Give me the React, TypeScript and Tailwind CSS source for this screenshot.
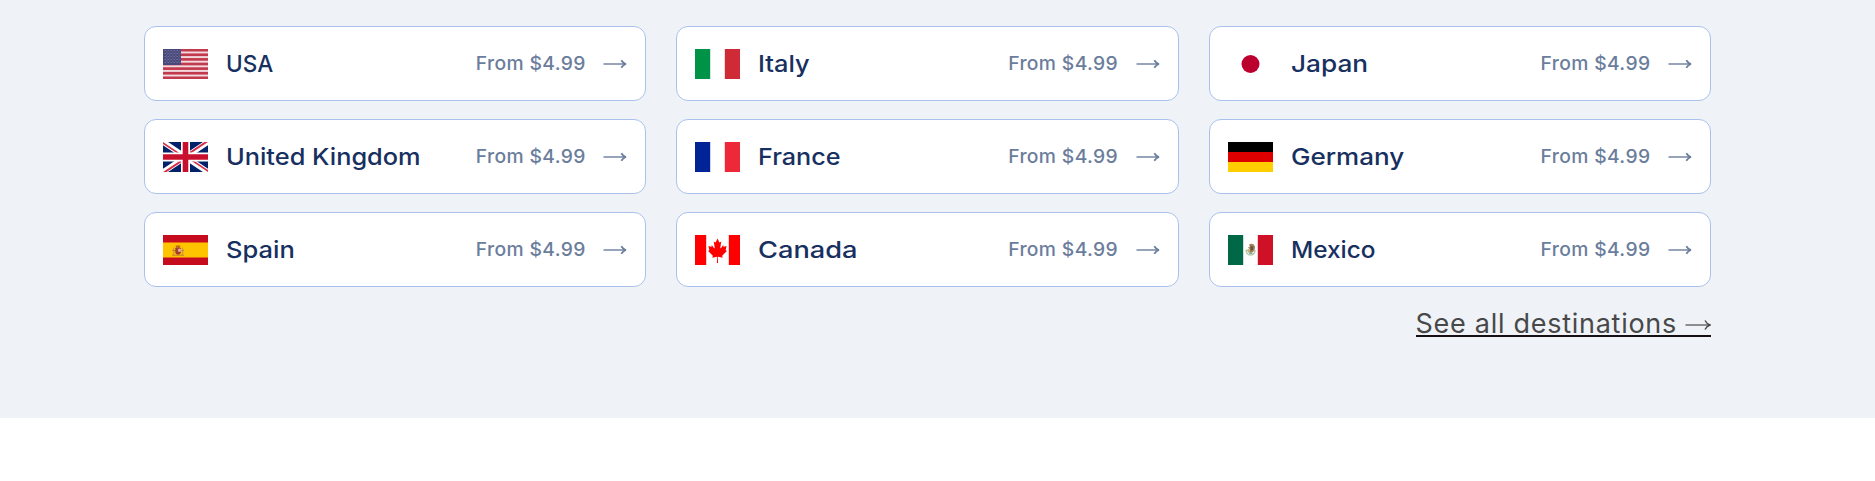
import type { ReactNode } from "react";

interface Destination {
  name: string;
  price: string;
  stretch: string;
  flag: ReactNode;
}

function FlagSvg({ children }: { children: ReactNode }) {
  return (
    <svg viewBox="0 0 45 30" className="h-[30px] w-[45px] shrink-0" aria-hidden="true">
      {children}
    </svg>
  );
}

function VerticalBands({ left, right }: { left: string; right: string }) {
  return (
    <>
      <path d="M0 0h45v30H0z" fill="#fff" />
      <path d="M0 0h15.2v30H0z" fill={left} />
      <path d="M29.8 0H45v30H29.8z" fill={right} />
    </>
  );
}

function UsaFlag() {
  return (
    <FlagSvg>
      <path d="M0 0h45v30H0z" fill="#f3dadf" />
      {[0, 1, 2, 3, 4, 5, 6].map((i) => (
        <rect key={i} y={(i * 60) / 13 - 0.2} width="45" height="2.7" fill="#c23a4e" />
      ))}
      <path d="M0 0h18v16H0z" fill="#48477b" />
      {[1.5, 4.5, 7.5, 10.5, 13.5].map((y) => (
        <path key={y} d={`M1.5 ${y}h16`} stroke="#fff" strokeOpacity=".22" strokeDasharray="1.5 1.5" />
      ))}
      {[3, 6, 9, 12].map((y) => (
        <path key={y} d={`M3 ${y}h14`} stroke="#fff" strokeOpacity=".2" strokeDasharray="1.5 1.5" />
      ))}
    </FlagSvg>
  );
}

function UkFlag() {
  return (
    <FlagSvg>
      <path d="M0 0h45v30H0z" fill="#012169" />
      <path d="M0 0l45 30M45 0L0 30" stroke="#fff" strokeWidth="5.6" />
      <path
        d="M0 0l22.5 15h-3L0 2zM45 0L22.5 15h-3.6L41.4 0zM45 30L22.5 15h3L45 28zM0 30l22.5-15h3.6L3.6 30z"
        fill="#d5304a"
      />
      <path d="M22.5 0v30M0 15h45" stroke="#fff" strokeWidth="9" />
      <path d="M22.5 0v30M0 15h45" stroke="#c8102e" strokeWidth="5.6" />
    </FlagSvg>
  );
}

function SpainFlag() {
  return (
    <FlagSvg>
      <path d="M0 0h45v30H0z" fill="#c60b1e" />
      <path d="M0 7.5h45v15H0z" fill="#ffc400" />
      <path d="M10 12.5h1.4v8H10zM18.8 12.5h1.4v8h-1.4z" fill="#d5983a" />
      <path d="M9 15.5h12M9 20.3h12" stroke="#c5842f" strokeWidth="1.1" />
      <path d="M12.5 10.8q2.5-1 5 0l-.5 2.200h-4z" fill="#c06a1c" />
      <path d="M12.3 13h5.600v4.500q-.6 2.200-2.800 2.200t-2.800-2.200z" fill="#a83c28" />
      <circle cx="16.6" cy="15.3" r="1.7" fill="#d5b1b4" />
    </FlagSvg>
  );
}

function CanadaFlag() {
  return (
    <FlagSvg>
      <path d="M0 0h45v30H0z" fill="#fff" />
      <path d="M0 0h11.2v30H0zM33.8 0H45v30H33.8z" fill="#f00" />
      <path
        transform="translate(4.05 .3) scale(.82 1)"
        d="M22.5 3.2l-2 3.6c-.3.5-.8.4-1.2.2l-1.4-.8 1.1 5.8c.2 1-.5 1-.9.6l-2.5-2.9-.4 1.5c0 .2-.2.4-.6.3l-3.2-.7.9 3.1c.2.6.3 1-.2 1.2l-1.1.5 5.5 4.5c.2.2.3.5.2.8l-.5 1.6 5.4-1c.3 0 .5.1.5.4l-.3 5.8h1.4l-.3-5.8c0-.3.2-.4.5-.4l5.4 1-.5-1.6c-.1-.3 0-.6.2-.8l5.5-4.5-1.1-.5c-.5-.2-.4-.6-.2-1.2l.9-3.1-3.2.7c-.4.1-.6-.1-.6-.3l-.4-1.5-2.5 2.9c-.4.4-1.1.4-.9-.6l1.1-5.8-1.4.8c-.4.2-.9.3-1.2-.2z"
        fill="#f00"
      />
    </FlagSvg>
  );
}

function MexicoFlag() {
  return (
    <FlagSvg>
      <VerticalBands left="#006847" right="#ce1126" />
      <path d="M18 14.5c.1 3.4 1.8 5.4 4.5 5.4s4.5-2 4.5-4.9" fill="none" stroke="#b9c9ad" strokeWidth="1.5" />
      <path d="M21 9.3c4-1.6 6.2.7 6 3.7-.2 2.400-1.800 4.300-4 5l-3.500-1 2.400-2.800-2-1.600 2-.8z" fill="#a58460" />
      <path d="M22.5 10.6l3 1.200-.6 3.400-2.400.5z" fill="#6b5541" />
      <path d="M18.2 15.2l2.8-1.500 1.400 2-1.600 1.600z" fill="#c8b37c" />
      <path d="M21 18.3h3.5" stroke="#6fae9b" strokeWidth="1.2" />
    </FlagSvg>
  );
}

const DESTINATIONS: Destination[] = [
  { name: "USA", price: "$4.99", stretch: "scale-x-[0.96]", flag: <UsaFlag /> },
  {
    name: "Italy",
    price: "$4.99",
    stretch: "scale-x-[1.08]",
    flag: (
      <FlagSvg>
        <VerticalBands left="#009246" right="#ce2b37" />
      </FlagSvg>
    ),
  },
  {
    name: "Japan",
    price: "$4.99",
    stretch: "scale-x-[1.115]",
    flag: (
      <FlagSvg>
        <path d="M0 0h45v30H0z" fill="#fff" />
        <circle cx="22.5" cy="15" r="9" fill="#bc002d" />
      </FlagSvg>
    ),
  },
  { name: "United Kingdom", price: "$4.99", stretch: "scale-x-[1.078]", flag: <UkFlag /> },
  {
    name: "France",
    price: "$4.99",
    stretch: "scale-x-[1.07]",
    flag: (
      <FlagSvg>
        <VerticalBands left="#002395" right="#ed2939" />
      </FlagSvg>
    ),
  },
  {
    name: "Germany",
    price: "$4.99",
    stretch: "scale-x-[1.107]",
    flag: (
      <FlagSvg>
        <path d="M0 0h45v10H0z" fill="#000" />
        <path d="M0 10h45v10H0z" fill="#d00" />
        <path d="M0 20h45v10H0z" fill="#ffce00" />
      </FlagSvg>
    ),
  },
  { name: "Spain", price: "$4.99", stretch: "scale-x-[1.085]", flag: <SpainFlag /> },
  { name: "Canada", price: "$4.99", stretch: "scale-x-[1.157]", flag: <CanadaFlag /> },
  { name: "Mexico", price: "$4.99", stretch: "scale-x-[1.037]", flag: <MexicoFlag /> },
];

function DestinationCard({ name, price, stretch, flag }: Destination) {
  return (
    <a
      href="#"
      className="flex h-[75px] items-center rounded-xl border border-[#a9c1ec] bg-white px-[18px]"
    >
      {flag}
      <span
        className={`ml-[18px] origin-left pt-px text-[23.5px] leading-none font-medium text-[#17305f] ${stretch}`}
      >
        {name}
      </span>
      <span className="ml-auto text-[19.3px] leading-none font-medium tracking-[0.36px] text-[#6b7d9c]">
        From {price}
      </span>
      <svg viewBox="0 0 24 10" className="ml-[17.6px] h-2.5 w-6" fill="none" stroke="#6b7d9c" aria-hidden="true">
        <path d="M.5 5h22" strokeWidth="1.4" />
        <path d="M18.3 1.2C19.5 3.2 21 4.5 23 5c-2 .5-3.5 1.8-4.7 3.8" strokeWidth="1.8" />
      </svg>
    </a>
  );
}

export default function App() {
  return (
    <main className="min-h-[481px] bg-white font-['Inter',sans-serif]">
      <section className="h-[418px] bg-[#eff3f8] pt-[26px] pr-[164px] pl-[144px]">
        <div className="grid grid-cols-3 gap-x-[30px] gap-y-[18px]">
          {DESTINATIONS.map((d) => (
            <DestinationCard key={d.name} {...d} />
          ))}
        </div>
        <div className="mt-[18px] flex justify-end">
          <a
            href="#"
            className="flex h-[32px] items-center border-b-2 border-[#171012] pt-[7px] text-[27px] leading-none text-[#484848]"
          >
            <span className="tracking-[0.72px]">See all destinations</span>
            <svg viewBox="0 0 26 12" className="mt-[3px] ml-2 h-3 w-[26px]" fill="none" stroke="#484848" aria-hidden="true">
              <path d="M.5 6h24" strokeWidth="1.2" />
              <path d="M20 1.5C21.2 3.8 22.8 5.3 25 6c-2.2.7-3.8 2.2-5 4.5" strokeWidth="1.4" />
            </svg>
          </a>
        </div>
      </section>
    </main>
  );
}
